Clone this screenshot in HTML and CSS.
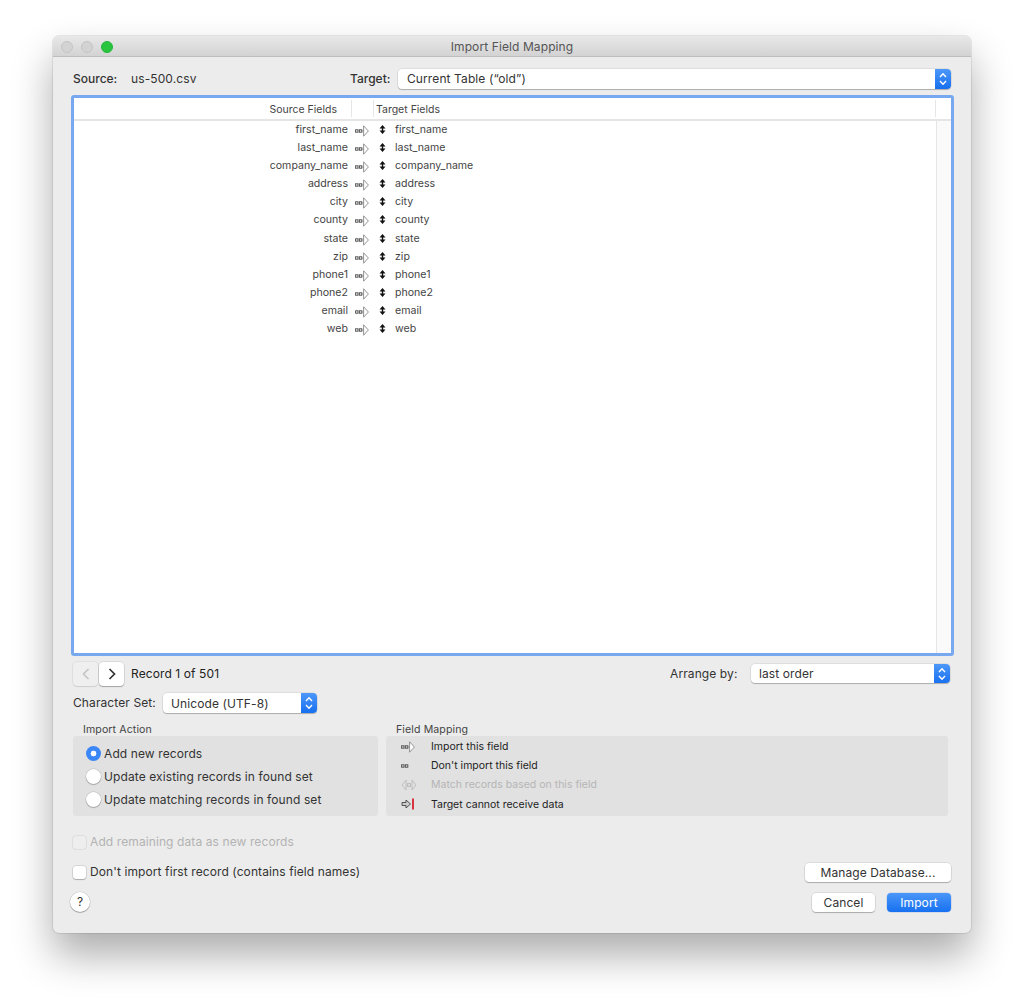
FILE: index.html
```html
<!DOCTYPE html>
<html lang="en">
<head>
<meta charset="utf-8">
<title>Import Field Mapping</title>
<link rel="stylesheet" href="styles.css">
</head>
<body>
<svg class="defs" width="0" height="0" aria-hidden="true">
  <symbol id="i-squares" viewBox="0 0 14 10">
    <rect x="0.6" y="3.8" width="2.4" height="2.4" fill="none" stroke="#555" stroke-width="1"/>
    <rect x="4.4" y="3.8" width="2.4" height="2.4" fill="none" stroke="#555" stroke-width="1"/>
  </symbol>
  <symbol id="i-arrow" viewBox="0 0 14 12">
    <rect x="0.6" y="4.8" width="2.4" height="2.4" fill="none" stroke="#555" stroke-width="1"/>
    <rect x="4.4" y="4.8" width="2.4" height="2.4" fill="none" stroke="#555" stroke-width="1"/>
    <path d="M7 6h1.6M8.6 .8 13.4 6 8.6 11.2Z" fill="#fff" stroke="#888" stroke-width=".9"/>
  </symbol>
  <symbol id="i-match" viewBox="0 0 16 12">
    <path d="M5 1 1 6l4 5Z M11 1 15 6l-4 5Z" fill="none" stroke="#bbb" stroke-width=".9"/>
    <rect x="6.6" y="4.6" width="2.8" height="2.8" fill="none" stroke="#bbb"/>
  </symbol>
  <symbol id="i-block" viewBox="0 0 14 12">
    <path d="M1 4.5h4V2l4.5 4L5 10V7.5H1Z" fill="#ccc" stroke="#444" stroke-width=".9"/>
    <rect x="11" y="0.5" width="2" height="11" fill="#d8343f"/>
  </symbol>
  <symbol id="i-updown" viewBox="0 0 7 9">
    <path d="M3.5 0 6.5 3.5H.5Z M3.5 9 .5 5.5h6Z" fill="#111"/>
    <rect x="2.8" y="3" width="1.4" height="3" fill="#111"/>
  </symbol>
  <symbol id="i-stepper" viewBox="0 0 16 20">
    <path d="M5 8 8 4.8 11 8M5 12l3 3.2 3-3.2" fill="none" stroke="#fff" stroke-width="1.4"/>
  </symbol>
</svg>

<main class="window">
  <header class="titlebar">
    <div class="lights">
      <span class="light"></span>
      <span class="light"></span>
      <span class="light light-green"></span>
    </div>
    <div class="title">Import Field Mapping</div>
  </header>

  <div class="content">
    <div class="source-row">
      <span class="label source-label">Source:</span>
      <span class="label source-file">us-500.csv</span>
      <span class="label target-label">Target:</span>
      <div class="select select-target">
        <span class="select-text">Current Table (“old”)</span>
        <span class="stepper"><svg width="16" height="20"><use href="#i-stepper"/></svg></span>
      </div>
    </div>

    <section class="table">
      <div class="table-head">
        <div class="th th-source">Source Fields</div>
        <div class="th th-mid"></div>
        <div class="th th-target">Target Fields</div>
        <div class="th th-scroll"></div>
      </div>
      <div class="table-body">
        <div class="rows">
          <div class="row"><span class="src">first_name</span><svg class="ic-arrow"><use href="#i-arrow"/></svg><svg class="ic-ud"><use href="#i-updown"/></svg><span class="tgt">first_name</span></div>
          <div class="row"><span class="src">last_name</span><svg class="ic-arrow"><use href="#i-arrow"/></svg><svg class="ic-ud"><use href="#i-updown"/></svg><span class="tgt">last_name</span></div>
          <div class="row"><span class="src">company_name</span><svg class="ic-arrow"><use href="#i-arrow"/></svg><svg class="ic-ud"><use href="#i-updown"/></svg><span class="tgt">company_name</span></div>
          <div class="row"><span class="src">address</span><svg class="ic-arrow"><use href="#i-arrow"/></svg><svg class="ic-ud"><use href="#i-updown"/></svg><span class="tgt">address</span></div>
          <div class="row"><span class="src">city</span><svg class="ic-arrow"><use href="#i-arrow"/></svg><svg class="ic-ud"><use href="#i-updown"/></svg><span class="tgt">city</span></div>
          <div class="row"><span class="src">county</span><svg class="ic-arrow"><use href="#i-arrow"/></svg><svg class="ic-ud"><use href="#i-updown"/></svg><span class="tgt">county</span></div>
          <div class="row"><span class="src">state</span><svg class="ic-arrow"><use href="#i-arrow"/></svg><svg class="ic-ud"><use href="#i-updown"/></svg><span class="tgt">state</span></div>
          <div class="row"><span class="src">zip</span><svg class="ic-arrow"><use href="#i-arrow"/></svg><svg class="ic-ud"><use href="#i-updown"/></svg><span class="tgt">zip</span></div>
          <div class="row"><span class="src">phone1</span><svg class="ic-arrow"><use href="#i-arrow"/></svg><svg class="ic-ud"><use href="#i-updown"/></svg><span class="tgt">phone1</span></div>
          <div class="row"><span class="src">phone2</span><svg class="ic-arrow"><use href="#i-arrow"/></svg><svg class="ic-ud"><use href="#i-updown"/></svg><span class="tgt">phone2</span></div>
          <div class="row"><span class="src">email</span><svg class="ic-arrow"><use href="#i-arrow"/></svg><svg class="ic-ud"><use href="#i-updown"/></svg><span class="tgt">email</span></div>
          <div class="row"><span class="src">web</span><svg class="ic-arrow"><use href="#i-arrow"/></svg><svg class="ic-ud"><use href="#i-updown"/></svg><span class="tgt">web</span></div>
        </div>
        <div class="scroll-track"></div>
      </div>
    </section>

    <div class="nav-row">
      <div class="nav-btn nav-prev"><svg width="10" height="14" viewBox="0 0 10 14"><path d="M7.5 2 2.5 7l5 5" fill="none" stroke="#c4c4c4" stroke-width="1.6"/></svg></div>
      <div class="nav-btn nav-next"><svg width="10" height="14" viewBox="0 0 10 14"><path d="M2.5 2l5 5-5 5" fill="none" stroke="#333" stroke-width="1.7"/></svg></div>
      <span class="label record">Record 1 of 501</span>
      <span class="label arrange-label">Arrange by:</span>
      <div class="select select-arrange">
        <span class="select-text">last order</span>
        <span class="stepper"><svg width="16" height="20"><use href="#i-stepper"/></svg></span>
      </div>
    </div>

    <div class="charset-row">
      <span class="label">Character Set:</span>
      <div class="select select-charset">
        <span class="select-text">Unicode (UTF-8)</span>
        <span class="stepper"><svg width="16" height="20"><use href="#i-stepper"/></svg></span>
      </div>
    </div>

    <div class="groups">
      <div class="group group-action">
        <div class="group-title">Import Action</div>
        <div class="group-box action-box">
          <div class="radio-row"><span class="radio radio-on"></span><span class="label">Add new records</span></div>
          <div class="radio-row"><span class="radio"></span><span class="label">Update existing records in found set</span></div>
          <div class="radio-row"><span class="radio"></span><span class="label">Update matching records in found set</span></div>
        </div>
      </div>
      <div class="group group-mapping">
        <div class="group-title">Field Mapping</div>
        <div class="group-box mapping-box">
          <div class="legend-row"><span class="legend-icon"><svg width="14" height="12"><use href="#i-arrow"/></svg></span><span>Import this field</span></div>
          <div class="legend-row"><span class="legend-icon"><svg width="14" height="10"><use href="#i-squares"/></svg></span><span>Don't import this field</span></div>
          <div class="legend-row legend-off"><span class="legend-icon"><svg width="16" height="12"><use href="#i-match"/></svg></span><span>Match records based on this field</span></div>
          <div class="legend-row"><span class="legend-icon"><svg width="14" height="12"><use href="#i-block"/></svg></span><span>Target cannot receive data</span></div>
        </div>
      </div>
    </div>

    <div class="check-row check-off">
      <span class="check"></span><span class="label">Add remaining data as new records</span>
    </div>

    <div class="check-row check-second">
      <span class="check"></span><span class="label">Don't import first record (contains field names)</span>
      <div class="btn btn-manage">Manage Database...</div>
    </div>

    <div class="footer">
      <div class="help">?</div>
      <div class="btn btn-cancel">Cancel</div>
      <div class="btn btn-import">Import</div>
    </div>
  </div>
</main>
</body>
</html>
```

FILE: styles.css
```css
* { box-sizing: border-box; }
html, body { margin: 0; padding: 0; background: #fff; }
body {
  width: 1024px;
  height: 1003px;
  padding: 36px 0 0 53px;
  overflow: hidden;
  font-family: Inter, "Liberation Sans", sans-serif;
  font-size: 12px;
  letter-spacing: .1px;
  color: #333;
}
.defs { position: absolute; }

.window {
  width: 918px;
  height: 897px;
  background: #ececec;
  border-radius: 6px;
  box-shadow: 0 0 0 1px rgba(0,0,0,.08), 0 22px 40px rgba(0,0,0,.33);
  display: flex;
  flex-direction: column;
  overflow: visible;
}

.titlebar {
  height: 21px;
  flex: none;
  position: relative;
  background: linear-gradient(#e8e8e8, #d3d3d3);
  border-bottom: 1px solid #bdbdbd;
  border-radius: 6px 6px 0 0;
}
.lights { display: flex; gap: 8px; padding: 5px 0 0 8px; }
.light {
  width: 12px; height: 12px; border-radius: 50%;
  background: #d3d3d3; border: 1px solid #c4c4c4;
}
.light-green { background: #29c53f; border-color: #25b739; }
.title {
  position: absolute; left: 0; right: 0; top: 4px;
  text-align: center; color: #555; line-height: 14px;
}

.content { flex: 1; padding: 12px 0 0 18px; }
.label { line-height: 14px; white-space: nowrap; }

.source-row { display: flex; align-items: center; height: 20px; }
.source-label { margin-left: 2px; width: 58px; font-weight: 500; letter-spacing: 0; }
.source-file { width: 219px; }
.target-label { width: 48px; font-weight: 500; letter-spacing: 0; }

.select {
  height: 20px;
  display: flex;
  align-items: center;
  background: #fff;
  border-radius: 4px;
  box-shadow: 0 0 0 .5px rgba(0,0,0,.12), 0 1px 1px rgba(0,0,0,.22);
  overflow: hidden;
}
.select-text { flex: 1; padding-left: 9px; white-space: nowrap; }
.stepper {
  width: 16px; height: 20px; flex: none; display: block;
  background: linear-gradient(#4d98f8, #176ff0);
}
.stepper svg { display: block; }
.select-target { width: 553px; }
.select-target .select-text { padding-bottom: 1px; }

.table {
  width: 883px;
  height: 561px;
  margin-top: 6px;
  background: #fff;
  border: 3px solid #78a9f0;
  border-radius: 3px;
  display: flex;
  flex-direction: column;
}
.table-head {
  height: 23px; flex: none;
  display: flex; align-items: center;
  border-bottom: 2px solid #e5e5e5;
  font-size: 10.5px; color: #444; letter-spacing: 0;
}
.th { height: 17px; line-height: 20px; }
.th-source { width: 278px; text-align: right; padding-right: 14px; border-right: 1px solid #e6e6e6; }
.th-mid { width: 22px; border-right: 1px solid #e6e6e6; }
.th-target { width: 562px; padding-left: 2px; border-right: 1px solid #e6e6e6; }
.th-scroll { width: 15px; }

.table-body { flex: 1; display: flex; min-height: 0; }
.rows { flex: 1; margin-top: -1px; }
.scroll-track { width: 15px; background: #fafafa; border-left: 1px solid #e6e6e6; }

.row {
  height: 18.18px;
  display: flex;
  align-items: center;
  font-size: 10.6px;
  color: #444;
  letter-spacing: 0;
}
.src { width: 274px; text-align: right; }
.ic-arrow { width: 14px; height: 12px; margin: 3px 0 0 7px; flex: none; }
.ic-ud { width: 7px; height: 9px; margin-left: 10px; flex: none; }
.tgt { margin-left: 9px; }

.nav-row { display: flex; align-items: center; height: 24px; margin-top: 6px; padding-left: 2px; }
.nav-btn {
  width: 25px; height: 24px;
  display: flex; align-items: center; justify-content: center;
  border-radius: 4px;
}
.nav-prev { background: #efefef; box-shadow: 0 0 0 .5px rgba(0,0,0,.1), 0 1px 1px rgba(0,0,0,.08); }
.nav-next { margin-left: 1px; background: #fff; box-shadow: 0 0 0 .5px rgba(0,0,0,.16), 0 1px 1px rgba(0,0,0,.25); }
.record { margin-left: 7px; width: 539px; color: #222; }
.arrange-label { width: 80px; }
.select-arrange { width: 199px; height: 19px; margin: -1px 0 0 1px; }
.select-arrange .select-text { padding-left: 8px; }

.charset-row { display: flex; align-items: center; height: 20px; margin-top: 7px; padding-left: 2px; }
.charset-row .label { width: 90px; }
.select-charset { width: 154px; }
.select-charset .select-text { padding-left: 8px; }

.groups { display: flex; margin-top: 9px; padding-left: 2px; }
.group-title { font-size: 10.6px; line-height: 16px; padding-left: 10px; height: 14px; color: #444; letter-spacing: .1px; }
.group-box { height: 80px; background: #e1e1e1; border-radius: 3px; }
.group-action { width: 305px; }
.group-mapping { width: 562px; margin-left: 8px; }
.action-box { padding-top: 6px; }
.radio-row { display: flex; align-items: center; height: 23px; padding-left: 13px; gap: 3px; }
.radio {
  width: 15px; height: 15px; border-radius: 50%; background: #fff;
  box-shadow: 0 0 0 .5px rgba(0,0,0,.18), 0 1px 1px rgba(0,0,0,.2);
}
.radio-on {
  background: radial-gradient(circle, #fff 0 2.6px, #3b87f7 3.2px);
  box-shadow: none;
}

.mapping-box { padding-top: 1px; font-size: 10.5px; color: #222; letter-spacing: 0; }
.legend-row { display: flex; align-items: center; height: 19.2px; }
.legend-icon { width: 45px; padding-left: 15px; display: flex; align-items: center; }
.legend-icon svg { display: block; }
.legend-off { color: #b5b5b5; }

.check-row { display: flex; align-items: center; padding-left: 2px; gap: 4px; }
.check {
  width: 13px; height: 13px; border-radius: 3px; background: #fff; flex: none;
  box-shadow: 0 0 0 .5px rgba(0,0,0,.18), 0 1px 1px rgba(0,0,0,.2);
}
.check-off { height: 16px; margin-top: 18px; color: #b3b3b3; }
.check-off .check { background: #eee; box-shadow: 0 0 0 .5px rgba(0,0,0,.12); }
.check-second { height: 20px; margin-top: 12px; }
.check-second .btn-manage { margin: 0 20px 0 auto; }

.btn {
  height: 19px; line-height: 19px; text-align: center;
  background: #fff; border-radius: 4px;
  box-shadow: 0 0 0 .5px rgba(0,0,0,.14), 0 1px 1px rgba(0,0,0,.22);
}
.btn-manage { width: 146px; }

.footer { display: flex; align-items: center; height: 22px; margin-top: 9px; padding-left: 0; }
.help {
  width: 20px; height: 20px; margin-left: -1px; border-radius: 50%; background: #fff; text-align: center;
  line-height: 20px; box-shadow: 0 0 0 .5px rgba(0,0,0,.14), 0 1px 1px rgba(0,0,0,.25);
}
.btn-cancel { width: 63px; margin-left: 722px; }
.btn-import {
  width: 64px; margin-left: 12px; color: #fff;
  background: linear-gradient(#4a97f8, #1770f1);
  box-shadow: 0 0 0 .5px rgba(0,60,200,.2);
}
```
